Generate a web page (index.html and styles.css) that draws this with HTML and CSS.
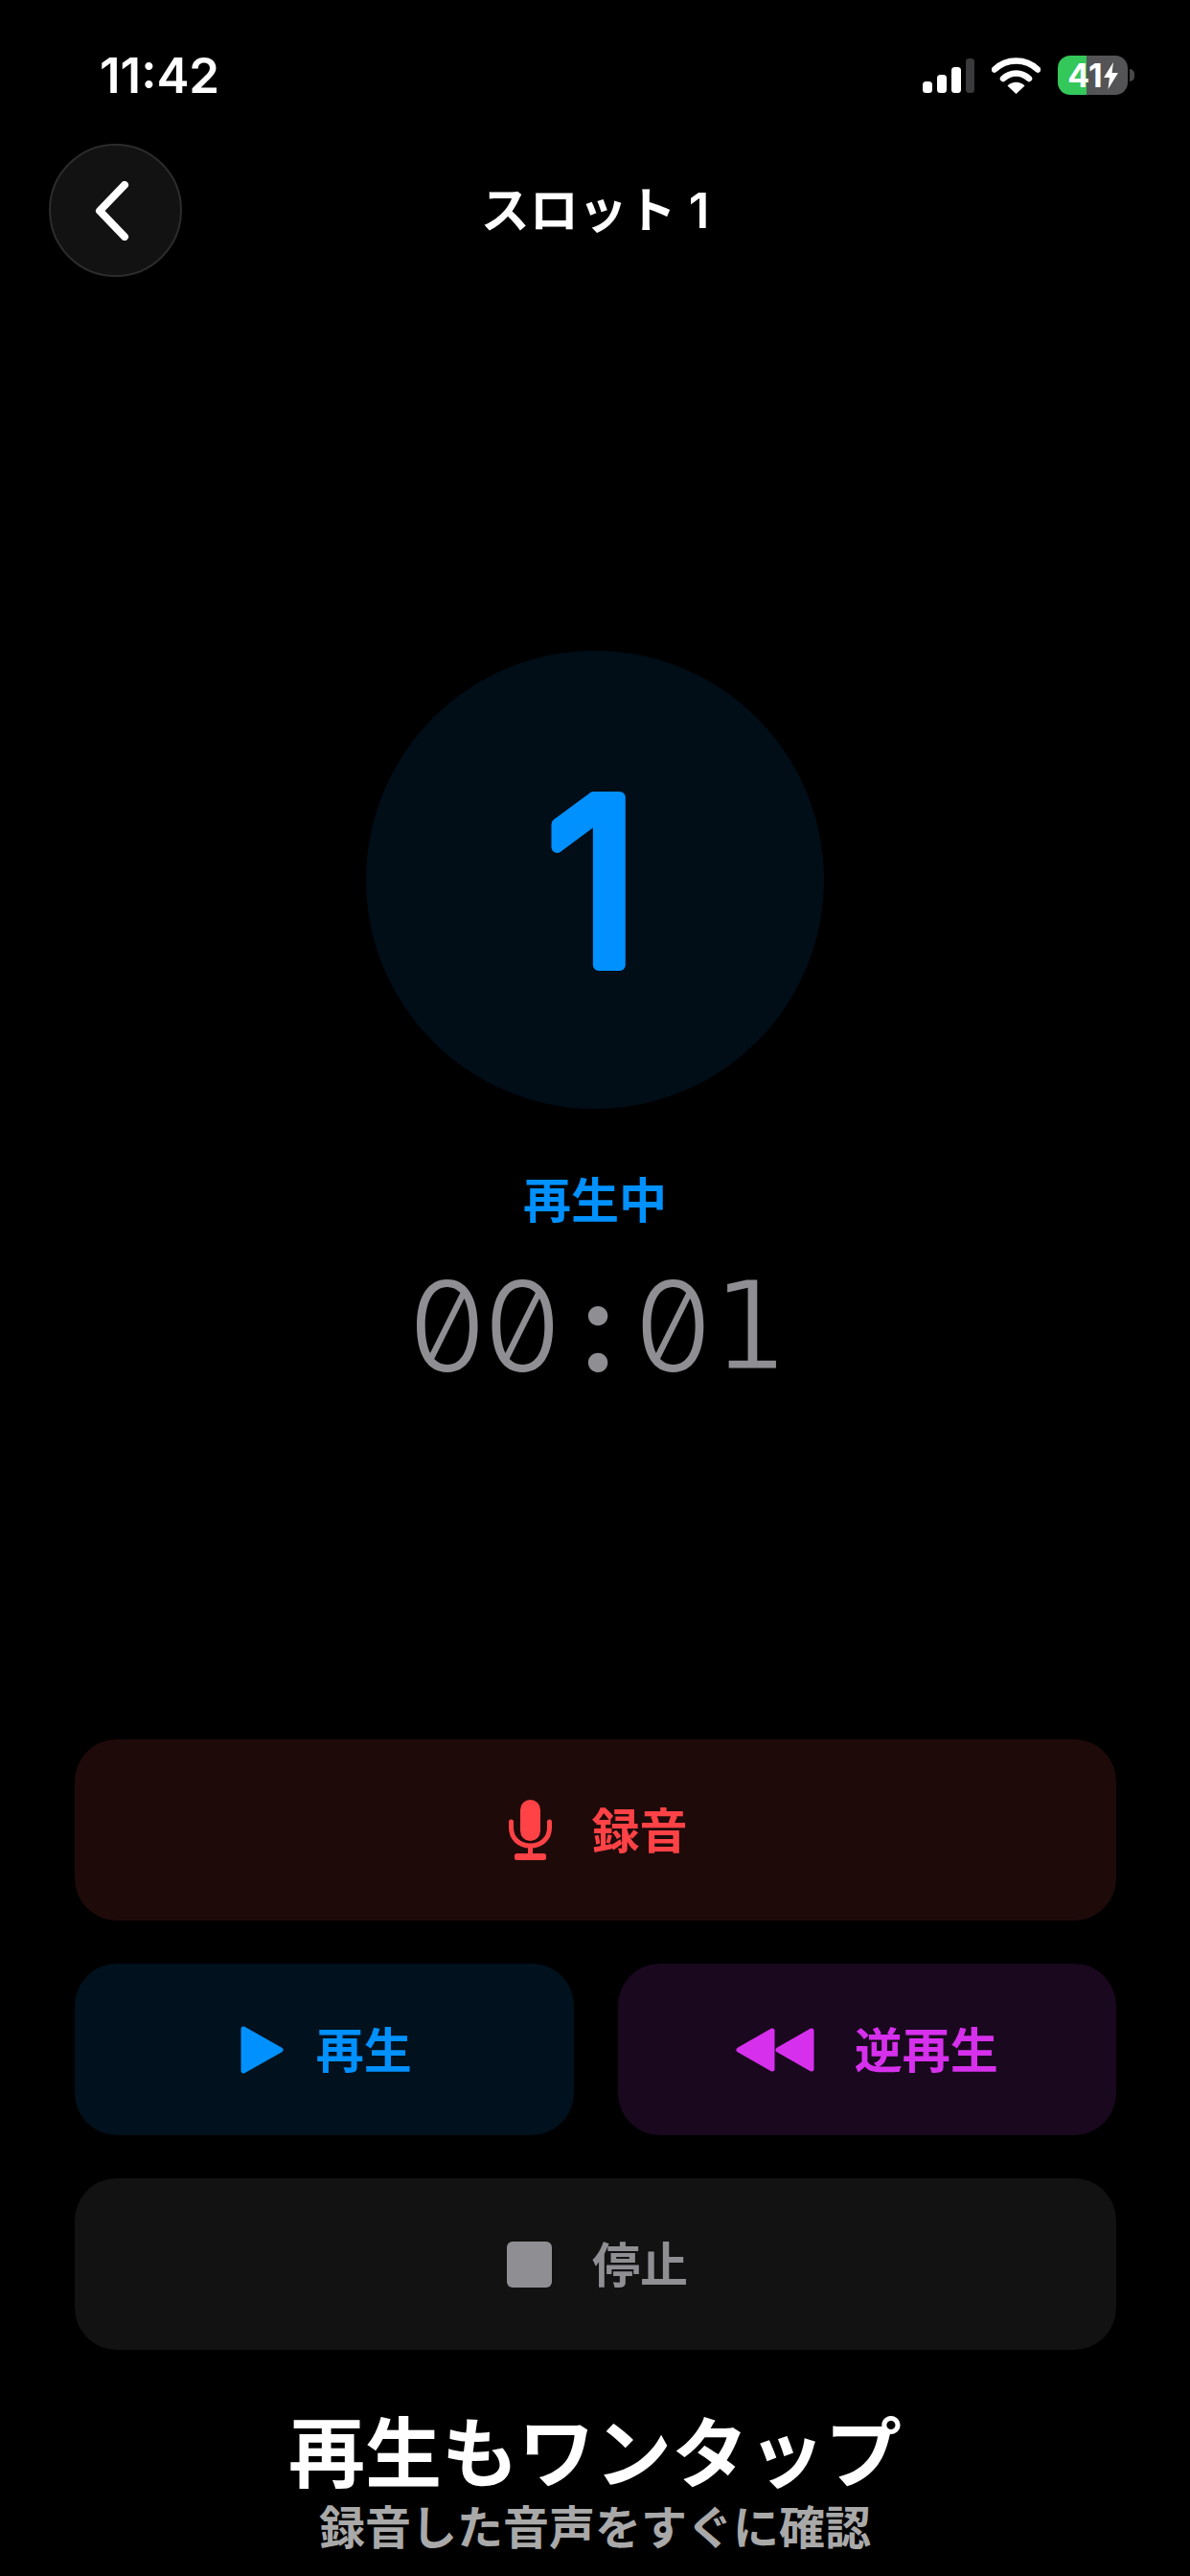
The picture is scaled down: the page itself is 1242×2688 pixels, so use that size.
FILE: index.html
```html
<!DOCTYPE html>
<html lang="ja">
<head>
    <meta charset="UTF-8">
    <meta name="viewport" content="width=device-width, initial-scale=1.0">
    <title>スロット 1</title>
    <link rel="stylesheet" href="styles.css">
</head>
<body>

<div class="status-bar">
    <span class="clock">11:42</span>
    <div class="status-icons">
        <svg class="signal" width="54" height="36" viewBox="0 0 54 36">
            <rect x="0" y="24" width="10" height="12" rx="3.5" fill="#fff"/>
            <rect x="15" y="17" width="10" height="19" rx="3.5" fill="#fff"/>
            <rect x="30" y="9" width="10" height="27" rx="3.5" fill="#fff"/>
            <rect x="45" y="0" width="9" height="36" rx="3.5" fill="#3a3a3c"/>
        </svg>
        <svg class="wifi" width="51" height="39" viewBox="0 0 51 39">
            <path d="M3 13.5C15.5 1.5 35.5 1.5 48 13.5" fill="none" stroke="#fff" stroke-width="6.5" stroke-linecap="round"/>
            <path d="M12 23C19.5 15.5 31.5 15.5 39 23" fill="none" stroke="#fff" stroke-width="6.5" stroke-linecap="round"/>
            <path d="M25.5 39L16.5 30.5C21.5 25.5 29.5 25.5 34.5 30.5Z" fill="#fff"/>
        </svg>
        <div class="battery">
            <span>41</span>
            <svg width="15" height="28" viewBox="0 0 15 28"><path d="M10 0L0 16H6L4.500 28L15 11H8.500Z" fill="#fff"/></svg>
        </div>
    </div>
</div>

<div class="nav">
    <button class="back">
        <svg width="36" height="62" viewBox="0 0 36 62"><path d="M31 4L5 31L31 58" fill="none" stroke="#fff" stroke-width="8" stroke-linecap="round" stroke-linejoin="round"/></svg>
    </button>
    <h1>スロット 1</h1>
</div>

<div class="player">
    <div class="slot-circle">
        <svg width="478" height="478" viewBox="0 0 478 478">
            <text class="slot-number" x="237" y="328" text-anchor="middle">1</text>
        </svg>
    </div>
    <p class="state">再生中</p>
    <p class="timer"><span>0</span><span>0</span><span class="timer-colon">:</span><span>0</span><span class="timer-one">1</span></p>
</div>

<div class="controls">
    <button class="btn btn-record">
        <svg width="45" height="63" viewBox="0 0 45 63">
            <rect x="12" y="0" width="21" height="43" rx="10.500" fill="currentColor"/>
            <path d="M2.500 23V29C2.500 40 10.500 48 22.500 48S42.500 40 42.500 29V23" fill="none" stroke="currentColor" stroke-width="5" stroke-linecap="round"/>
            <rect x="20" y="48" width="5" height="10" fill="currentColor"/>
            <rect x="6" y="56" width="33" height="7" rx="2.500" fill="currentColor"/>
        </svg>
        <span>録音</span>
    </button>
    <div class="btn-row">
        <button class="btn btn-play">
            <svg width="45" height="50" viewBox="0 0 45 50"><path d="M3 3L42 25L3 47Z" fill="currentColor" stroke="currentColor" stroke-width="5" stroke-linejoin="round"/></svg>
            <span>再生</span>
        </button>
        <button class="btn btn-reverse">
            <svg width="82" height="46" viewBox="0 0 82 46">
                <path d="M38 3V43L3 23Z" fill="currentColor" stroke="currentColor" stroke-width="5" stroke-linejoin="round"/>
                <path d="M79 3V43L44 23Z" fill="currentColor" stroke="currentColor" stroke-width="5" stroke-linejoin="round"/>
            </svg>
            <span>逆再生</span>
        </button>
    </div>
    <button class="btn btn-stop">
        <svg width="47" height="48" viewBox="0 0 47 48"><rect width="47" height="48" rx="6" fill="currentColor"/></svg>
        <span>停止</span>
    </button>
</div>

<div class="caption">
    <h2>再生もワンタップ</h2>
    <p>録音した音声をすぐに確認</p>
</div>

</body>
</html>
```

FILE: styles.css
```css
body {
    font-family: Inter, "Noto Sans CJK JP", sans-serif;
    margin: 0;
    width: 1242px;
    height: 2688px;
    overflow: hidden;
    background-color: #000;
    color: #fff;
}
.status-bar {
    height: 150px;
    box-sizing: border-box;
    padding: 50px 65px 0 104px;
    display: flex;
    justify-content: space-between;
    align-items: flex-start;
}
.clock {
    font-size: 51px;
    font-weight: 600;
    line-height: 58px;
}
.status-icons {
    display: flex;
    align-items: center;
    margin-top: 8px;
}
.signal {
    margin-right: 18px;
}
.wifi {
    margin-right: 18px;
}
.battery {
    position: relative;
    width: 73px;
    height: 41px;
    border-radius: 13px;
    background: linear-gradient(90deg, #34c759 41%, #545456 41%);
    display: flex;
    align-items: center;
    justify-content: center;
    gap: 1px;
    font-size: 34px;
    font-weight: 700;
}
.battery::after {
    content: "";
    position: absolute;
    left: 75px;
    top: 14px;
    width: 5px;
    height: 13px;
    border-radius: 0 6px 6px 0;
    background-color: #48484a;
}
.nav {
    height: 139px;
    padding: 0 51px;
    display: grid;
    grid-template-columns: 139px 1fr 139px;
    align-items: center;
}
.back {
    width: 139px;
    height: 139px;
    padding: 0 8px 0 0;
    border: 2px solid #2c2c2e;
    border-radius: 50%;
    background-color: #121212;
    display: flex;
    align-items: center;
    justify-content: center;
}
h1 {
    margin: 0;
    font-size: 51px;
    font-weight: 600;
    line-height: 60px;
    text-align: center;
}
.player {
    margin-top: 390px;
    display: flex;
    flex-direction: column;
    align-items: center;
}
.slot-circle {
    width: 478px;
    height: 478px;
    border-radius: 50%;
    background-color: #010d17;
}
.slot-number {
    font-family: Inter, sans-serif;
    font-size: 240px;
    font-weight: 400;
    fill: #0091ff;
    stroke: #0091ff;
    stroke-width: 12px;
    stroke-linejoin: round;
}
.state {
    margin: 66px 0 0;
    font-size: 50px;
    font-weight: 600;
    line-height: 60px;
    color: #0091ff;
}
.timer {
    margin: 26px 0 0;
    padding-left: 6px;
    display: flex;
    font-size: 130px;
    font-weight: 300;
    font-feature-settings: "zero", "tnum";
    line-height: 150px;
    color: #8e8e93;
}
.timer span {
    width: 78.6px;
    display: flex;
    justify-content: center;
}
.timer .timer-colon {
    font-weight: 600;
}
.timer .timer-one {
    font-family: "DejaVu Sans Mono", monospace;
    font-weight: 400;
    -webkit-text-stroke: 3px #000;
}
.controls {
    margin: 356px 77px 0 78px;
    display: flex;
    flex-direction: column;
    gap: 45px;
}
.btn-row {
    display: grid;
    grid-template-columns: 1fr 1fr;
    gap: 46px;
}
.btn {
    height: 179px;
    width: 100%;
    padding: 0;
    border: none;
    border-radius: 44px;
    display: flex;
    align-items: center;
    justify-content: center;
    gap: 42px;
    font-family: inherit;
    font-size: 50px;
    font-weight: 600;
}
.btn span {
    margin-bottom: 6px;
}
.btn-record {
    height: 189px;
    padding-left: 5px;
    background-color: #1f0a0a;
    color: #ff4245;
}
.btn-play {
    padding-left: 4px;
    background-color: #01111d;
    color: #0091ff;
    gap: 34px;
}
.btn-reverse {
    background-color: #1a081f;
    color: #d630ed;
}
.btn-stop {
    padding-left: 4px;
    background-color: #121212;
    color: #8e8e93;
}
.caption {
    margin-top: 58px;
    text-align: center;
}
.caption h2 {
    margin: 0;
    font-size: 80px;
    font-weight: 700;
    line-height: 100px;
}
.caption p {
    margin: -2px 0 0;
    font-size: 48px;
    font-weight: 700;
    line-height: 60px;
    color: #a9a9a9;
}
```
